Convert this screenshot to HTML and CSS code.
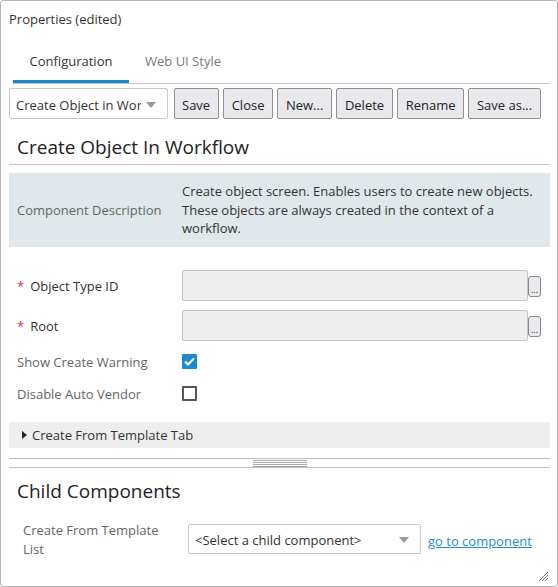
FILE: index.html
```html
<!DOCTYPE html>
<html>
<head>
<link rel="stylesheet" href="styles.css">
</head>
<body>

<div class="panel">
  <div class="panel-title">Properties (edited)</div>

  <div class="tabs">
    <div class="tab active">Configuration</div>
    <div class="tab">Web UI Style</div>
  </div>

  <div class="toolbar">
    <div class="select-wrap toolbar-select">
      <select>
        <option>Create Object in Workflow</option>
      </select>
    </div>
    <button>Save</button>
    <button>Close</button>
    <button>New...</button>
    <button>Delete</button>
    <button>Rename</button>
    <button>Save as...</button>
  </div>

  <div class="content">
    <h2 class="heading">Create Object In Workflow</h2>

    <div class="desc">
      <div class="desc-label">Component Description</div>
      <div class="desc-text">Create object screen. Enables users to create new objects. These objects are always created in the context of a workflow.</div>
    </div>

    <div class="fields">
      <div class="field">
        <div class="field-label required"><span class="star">*</span>Object Type ID</div>
        <input type="text" class="field-input" disabled>
        <button class="pick">...</button>
      </div>
      <div class="field">
        <div class="field-label required"><span class="star">*</span>Root</div>
        <input type="text" class="field-input" disabled>
        <button class="pick">...</button>
      </div>
      <div class="field check-row">
        <div class="field-label">Show Create Warning</div>
        <span class="check checked">
          <svg width="11" height="9" viewBox="0 0 11 9"><path d="M1 4.5 L4 7.5 L10 1.5" fill="none" stroke="#fff" stroke-width="2"/></svg>
        </span>
      </div>
      <div class="field check-row">
        <div class="field-label">Disable Auto Vendor</div>
        <span class="check"></span>
      </div>
    </div>

    <div class="group">
      <span class="caret"></span>Create From Template Tab
    </div>

    <div class="splitter"><div class="grip"></div></div>

    <h2 class="heading child-heading">Child Components</h2>

    <div class="child-row">
      <div class="child-label">Create From Template List</div>
      <div class="select-wrap child-select">
        <select>
          <option>&lt;Select a child component&gt;</option>
        </select>
      </div>
      <a href="#" class="link">go to component</a>
    </div>
  </div>

  <div class="resize">
    <svg width="12" height="12" viewBox="0 0 12 12">
      <path d="M11 2 L2 11 M11 5 L5 11 M11 8 L8 11" stroke="#777" stroke-width="1"/>
    </svg>
  </div>
</div>

</body>
</html>
```

FILE: styles.css
```css
body {
  margin: 0;
  font-family: "Open Sans", "Noto Sans", sans-serif;
  font-size: 13px;
  color: #333;
  background: #fff;
}

.panel {
  position: relative;
  width: 558px;
  height: 587px;
  box-sizing: border-box;
  border: 1px solid #b5b5b5;
  border-radius: 3px;
  overflow: hidden;
}

.panel-title {
  height: 37px;
  line-height: 36px;
  padding-left: 8px;
}

.tabs {
  display: flex;
  margin: 0 7px 0 12px;
  border-bottom: 1px solid #c4c4c4;
}

.tab {
  height: 45px;
  box-sizing: border-box;
  line-height: 46px;
  padding: 0 16px;
  color: #777;
  border-bottom: 3px solid transparent;
}

.tab.active {
  width: 116px;
  padding: 0;
  text-align: center;
  color: #333;
  border-bottom-color: #1b87c9;
}

.toolbar {
  display: flex;
  gap: 4.5px;
  padding: 4px 8px 0;
  height: 31px;
}

.select-wrap {
  position: relative;
}

.select-wrap select {
  width: 100%;
  height: 100%;
  appearance: none;
  -webkit-appearance: none;
  font: inherit;
  color: #333;
  background: #fff;
  border: 1px solid #c8c8c8;
  border-radius: 2px;
  padding: 2px 26px 0 6px;
  box-sizing: border-box;
}

.select-wrap::after {
  content: "";
  position: absolute;
  top: 50%;
  right: 12px;
  margin-top: -2px;
  border-left: 5px solid transparent;
  border-right: 5px solid transparent;
  border-top: 6px solid #9a9a9a;
  pointer-events: none;
}

.toolbar-select {
  width: 159px;
  margin-right: 1px;
}

button {
  font: inherit;
  color: #222;
  background: #e9e9ed;
  border: 1px solid #8f8f94;
  border-radius: 2px;
  padding: 2px 7.5px 0;
  height: 31px;
}

.content {
  padding: 0 7px 0 8px;
}

.heading {
  margin: 0;
  font-weight: normal;
  font-size: 19px;
  line-height: 26px;
  color: #222;
  padding: 15px 8px 4px;
  border-bottom: 1px solid #c4c4c4;
}

.desc {
  display: flex;
  align-items: center;
  margin-top: 8px;
  background: #e1e8eb;
  padding: 9px 12px 9px 0;
}

.desc-label {
  width: 165px;
  padding-left: 8px;
  color: #666;
}

.desc-text {
  flex: 1;
  line-height: 18.5px;
}

.fields {
  margin-top: 19px;
}

.field {
  display: flex;
  align-items: center;
  height: 40px;
}

.field.check-row {
  height: 32px;
}

.field-label {
  width: 165px;
  padding-left: 8px;
  color: #666;
}

.field-label.required {
  color: #333;
}

.star {
  color: #d6323a;
  margin-right: 6px;
}

.field-input {
  width: 346px;
  height: 31px;
  box-sizing: border-box;
  background: #eee;
  border: 1px solid #c6c6c6;
  border-radius: 2px;
}

.pick {
  width: 13px;
  height: 21px;
  padding: 0;
  margin-top: 2px;
  font-size: 9px;
  line-height: 26px;
  border-radius: 3px;
  border-color: #888;
  background: #eaeaee;
  overflow: hidden;
}

.check {
  display: flex;
  align-items: center;
  justify-content: center;
  width: 15px;
  height: 15px;
  box-sizing: border-box;
  border: 2px solid #555;
  border-radius: 1px;
}

.check.checked {
  background: #1c8ad0;
  border-color: #1c8ad0;
}

.group {
  display: flex;
  align-items: center;
  margin-top: 12px;
  height: 26px;
  background: #eee;
  padding-left: 13px;
}

.caret {
  width: 0;
  height: 0;
  border-top: 4px solid transparent;
  border-bottom: 4px solid transparent;
  border-left: 5px solid #222;
  margin-right: 5px;
}

.splitter {
  margin-top: 10px;
  height: 8px;
  border-top: 1px solid #bdbdbd;
  border-bottom: 1px solid #bdbdbd;
}

.grip {
  width: 54px;
  height: 7px;
  margin: 1px auto 0;
  background: repeating-linear-gradient(#aaa 0 1px, transparent 1px 2px);
}

.child-heading {
  padding-top: 10px;
  border-bottom: none;
}

.child-row {
  display: flex;
  align-items: center;
  margin-top: 11px;
}

.child-label {
  width: 145px;
  padding: 2px 20px 0 14px;
  color: #666;
  line-height: 19px;
}

.child-select {
  width: 233px;
  height: 30px;
}

.link {
  margin-left: 7px;
  padding-top: 4px;
  color: #1b8fd6;
}

.resize {
  position: absolute;
  right: 8px;
  bottom: 6px;
  width: 12px;
  height: 12px;
}
```
